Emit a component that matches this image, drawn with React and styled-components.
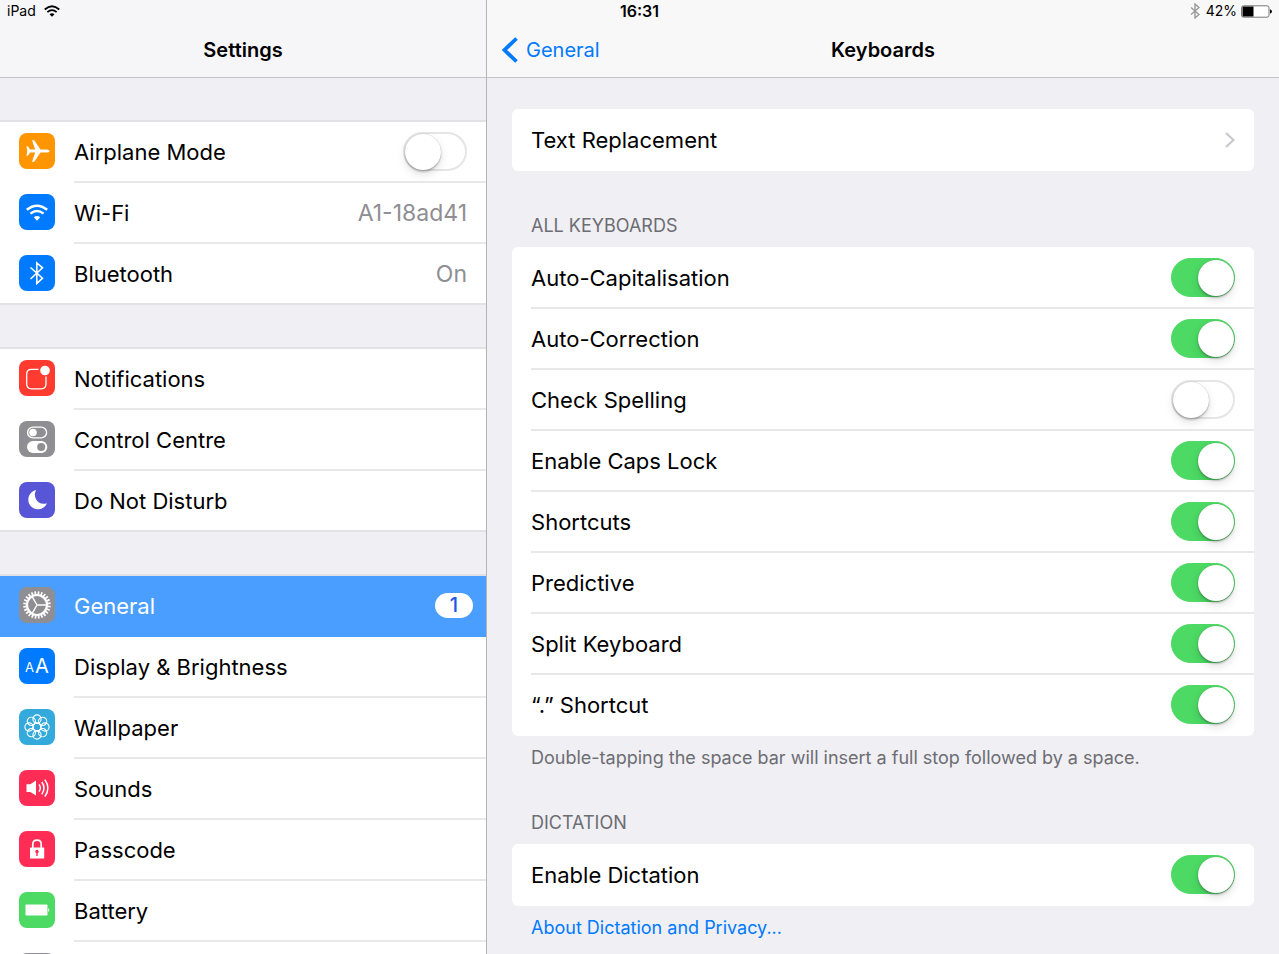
import React, { useState } from "react";
import styled, { createGlobalStyle } from "styled-components";

const GlobalStyle = createGlobalStyle`
  * {
    box-sizing: border-box;
  }

  body {
    margin: 0;
    background: #efeff4;
    color: #000;
    font-family: Inter, "Liberation Sans", sans-serif;
    font-size: 22px;
  }
`;

const Page = styled.div`
  display: flex;
  flex-direction: column;
  height: 100vh;
  overflow: hidden;
`;

/* the two bar tints and the pane divider run up behind the status bar */
const StatusBar = styled.header`
  display: grid;
  grid-template-columns: 1fr auto 1fr;
  align-items: center;
  height: 22px;
  padding: 0 7px;
  font-size: 14px;
  line-height: 20px;
  background: linear-gradient(
    90deg,
    #f6f6f8 38%,
    #b4b4b8 38%,
    #b4b4b8 calc(38% + 1px),
    #f8f8f8 calc(38% + 1px)
  );
`;

const StatusSide = styled.div`
  display: flex;
  align-items: center;
  justify-content: ${({ $end }) => ($end ? "flex-end" : "flex-start")};
  gap: ${({ $end }) => ($end ? "6px" : "8px")};
`;

const Charge = styled.span`
  display: flex;
  align-items: center;
  gap: 4px;
`;

const Time = styled.time`
  font-size: 16px;
  font-weight: 600;
`;

const Panes = styled.div`
  display: grid;
  grid-template-columns: 38% 1fr;
  flex: 1;
  min-height: 0;
`;

const Pane = styled.section`
  display: flex;
  flex-direction: column;
  min-width: 0;
  min-height: 0;
  border-left: ${({ $divided }) => ($divided ? "1px solid #b4b4b8" : "none")};
`;

const NavBar = styled.div`
  display: grid;
  grid-template-columns: 1fr auto 1fr;
  align-items: center;
  flex: none;
  height: 56px;
  padding: 0 15px;
  background: ${({ $light }) => ($light ? "#f8f8f8" : "#f6f6f8")};
  border-bottom: 1px solid #c4c4c8;
`;

const NavTitle = styled.h1`
  grid-column: 2;
  margin: 0;
  font-size: 20px;
  font-weight: 600;
  line-height: 24px;
`;

const BackLink = styled.a`
  display: flex;
  align-items: center;
  gap: 8px;
  font-size: 20px;
  line-height: 24px;
  color: #007aff;
  text-decoration: none;
`;

const Scroller = styled.div`
  flex: 1;
  min-height: 0;
  overflow-y: auto;
  scrollbar-width: none;
  padding: ${({ $inset }) => ($inset ? "31px 25px" : "42px 0")};
`;

const ItemRow = styled.a`
  display: flex;
  align-items: center;
  gap: 19px;
  height: 61px;
  padding-left: 19px;
  color: ${({ $active }) => ($active ? "#fff" : "inherit")};
  background: ${({ $active }) => ($active ? "#4a9eff" : "none")};
  text-decoration: none;
`;

const ItemBody = styled.span`
  display: flex;
  align-items: center;
  justify-content: space-between;
  flex: 1;
  align-self: stretch;
  padding-right: ${({ $badge }) => ($badge ? "13px" : "19px")};
  border-bottom: 2px solid ${({ $badge }) => ($badge ? "#4a9eff" : "#e8e8ea")};
`;

const Group = styled.ul`
  margin: 0 0 42px;
  padding: 0;
  list-style: none;
  background: #fff;
  border: solid #e2e2e6;
  border-width: 2px 0;

  li:last-child ${ItemRow} {
    height: 59px;
  }

  li:last-child ${ItemBody} {
    border-bottom: none;
  }
`;

const Tile = styled.span`
  display: flex;
  flex: none;
  align-self: flex-start;
  width: 36px;
  height: 36px;
  margin-top: 11px;
  border-radius: 8px;
  background: ${({ $color }) => $color};
`;

const Value = styled.span`
  color: #8e8e93;
  font-size: 23px;
`;

const Badge = styled.span`
  width: 38px;
  border-radius: 13px;
  background: #fff;
  color: #1f56ea;
  font-size: 20px;
  font-weight: 500;
  line-height: 25px;
  text-align: center;
`;

const Section = styled.section`
  margin-bottom: 43px;
`;

const SectionTitle = styled.h2`
  margin: 0 19px 9px;
  color: #6d6d72;
  font-size: 18px;
  font-weight: 400;
  line-height: 24px;
`;

const Card = styled.div`
  padding-top: 1px;
  border-radius: 6px;
  background: #fff;
`;

const CardRow = styled.label`
  display: flex;
  align-items: center;
  justify-content: space-between;
  height: 61px;
  margin-left: 19px;
  padding-right: 19px;
  border-bottom: 2px solid #e8e8ea;
  color: inherit;
  text-decoration: none;

  &:last-child {
    border-color: transparent;
  }
`;

const Footnote = styled.p`
  margin: 12px 19px 0;
  color: #6d6d72;
  font-size: 18px;
  line-height: 20px;
`;

const TextLink = styled.a`
  color: #007aff;
  text-decoration: none;
`;

const Toggle = styled.input.attrs({ type: "checkbox", role: "switch" })`
  appearance: none;
  display: flex;
  align-items: center;
  flex: none;
  width: 64px;
  height: 39px;
  margin: 0;
  border: 2px solid #e5e5e5;
  border-radius: 20px;
  background: #fff;

  &::before {
    content: "";
    width: 36px;
    height: 36px;
    border-radius: 50%;
    background: #fff;
    box-shadow: 0 0 1px rgba(0, 0, 0, 0.3), 0 2px 2px rgba(0, 0, 0, 0.2),
      0 4px 10px rgba(0, 0, 0, 0.12);
  }

  &:checked {
    justify-content: flex-end;
    border-width: 1px;
    border-color: #4cd964;
    background: #4cd964;
  }
`;

const WifiGlyph = ({ width, height }) => (
  <svg width={width} height={height} viewBox="0 0 22 16" fill="none" stroke="currentColor" strokeWidth="2.5">
    <path d="M1 6 Q11 -3 21 6" />
    <path d="M4.6 9.6 Q11 4 17.4 9.6" />
    <path d="M11 16 L7.6 12.6 Q11 9.8 14.4 12.6 Z" fill="currentColor" stroke="none" />
  </svg>
);

const BluetoothGlyph = () => (
  <svg width="10" height="16" viewBox="0 0 10 16" fill="none" stroke="#9a9a9a" strokeWidth="1.4">
    <path d="M1 4.5 L9 11.5 L5 15 V1 L9 4.5 L1 11.5" />
  </svg>
);

const BatteryGlyph = () => (
  <svg width="31" height="13" viewBox="0 0 31 13">
    <rect x="0.5" y="0.8" width="27.5" height="11.4" rx="2" fill="#fff" stroke="#777" />
    <path d="M1.5 1.5 H12.5 V11.5 H1.5 Z" />
    <path d="M29 4.3 Q31 5 31 6.5 T29 8.7 Z" />
  </svg>
);

const petals = [0, 45, 90, 135, 180, 225, 270, 315];
const teeth = Array.from({ length: 24 }, (_, i) => i * 15 + 7);

const glyphs = {
  airplane: (
    <path
      fill="#fff"
      d="M30.5 18 C30.5 16.9 29 16.4 27 16.4 H21.5 L15.2 7.3 H13 L16.2 16.4 H11.2 L8.8 13.2 H7.4 L8.3 18 L7.4 22.8 H8.8 L11.2 19.6 H16.2 L13 28.7 H15.2 L21.5 19.6 H27 C29 19.6 30.5 19.1 30.5 18 Z"
    />
  ),
  wifi: (
    <g fill="none" stroke="#fff" strokeWidth="2.4">
      <path d="M7.8 15.8 Q18 7.5 28.2 15.8" />
      <path d="M11.4 19.7 Q18 14.2 24.6 19.7" />
      <path d="M18 26.8 L14.8 23.2 Q18 21 21.2 23.2 Z" fill="#fff" stroke="none" />
    </g>
  ),
  bluetooth: (
    <path d="M11.5 12.5 L23.5 23.2 L17.8 28.5 V8 L23.5 12.8 L11.5 24" fill="none" stroke="#fff" strokeWidth="1.6" />
  ),
  notifications: (
    <g>
      <path
        d="M19.5 9.4 H12.5 Q7.7 9.4 7.7 14.2 V24 Q7.7 28.8 12.5 28.8 H22.2 Q27 28.8 27 24 V16.5"
        fill="none"
        stroke="#fff"
        strokeWidth="1.3"
      />
      <circle cx="26" cy="10.5" r="4.8" fill="#fff" />
    </g>
  ),
  control: (
    <g>
      <rect x="8.6" y="6.1" width="19" height="10.8" rx="5.4" fill="none" stroke="#fff" strokeWidth="1.4" />
      <circle cx="14" cy="11.5" r="3.8" fill="#fff" />
      <rect x="8" y="20" width="20.3" height="12" rx="6" fill="#fff" />
      <circle cx="22.2" cy="26" r="4" fill="#8e8e93" />
    </g>
  ),
  moon: <path d="M17.2 8 C13 14.5 19 24.5 28 21.2 C26 25.5 22.5 27.2 19 27.2 C13.5 27.2 9.3 23 9.3 17.8 C9.3 13 12.6 9 17.2 8 Z" fill="#fff" />,
  gear: (
    <g stroke="#fff" fill="none">
      <circle cx="18" cy="18" r="10" strokeWidth="2.2" />
      {teeth.map((a) => (
        <path key={a} d="M18 8 V4.2" strokeWidth="1.7" transform={`rotate(${a} 18 18)`} />
      ))}
      <path d="M18 18 H28 M18 18 L13 9.3 M18 18 L13 26.7" strokeWidth="1.4" />
    </g>
  ),
  display: (
    <g fill="#fff" fontFamily="Inter, sans-serif">
      <text x="6" y="24" fontSize="13">A</text>
      <text x="16" y="25" fontSize="20">A</text>
    </g>
  ),
  wallpaper: (
    <g fill="none" stroke="#fff" strokeWidth="1.1">
      {petals.map((a) => (
        <circle key={a} cx="18" cy="10" r="4.1" transform={`rotate(${a} 18 18)`} />
      ))}
      <circle cx="18" cy="18" r="3.9" />
      {petals.map((a) => (
        <path key={a} d="M18 14.1 Q16.6 12.6 15.4 13" strokeWidth="0.9" transform={`rotate(${a} 18 18)`} />
      ))}
    </g>
  ),
  sounds: (
    <g>
      <path d="M7.5 14.2 H11.2 L17 10.5 V25.5 L11.2 22 H7.5 Z" fill="#fff" />
      <g fill="none" stroke="#fff" strokeWidth="1.5">
        <path d="M20 14.5 Q22.6 18 20 21.6" />
        <path d="M22.8 12 Q27.2 18 22.8 24.2" />
        <path d="M25.8 9.6 Q32 18 25.8 26.6" />
      </g>
    </g>
  ),
  passcode: (
    <g>
      <path d="M13.8 17.5 V13.3 Q13.8 9.2 18 9.2 T22.2 13.3 V17.5" fill="none" stroke="#fff" strokeWidth="1.7" />
      <rect x="11" y="16.5" width="14.2" height="11" rx="0.6" fill="#fff" />
      <circle cx="18" cy="20.5" r="1.7" fill="#ff2d55" />
      <path d="M18 21 V25" stroke="#ff2d55" strokeWidth="1.4" />
    </g>
  ),
  battery: (
    <g fill="#fff">
      <rect x="6.5" y="12.5" width="22" height="11" rx="0.8" />
      <path d="M29.2 16 Q31.5 18 29.2 20 Z" />
    </g>
  ),
  privacy: (
    <path
      d="M12 20 V12 M16 18 V9 M20 18 V9 M24 19 V12 M12 19 Q12 28 18 28 T24 19"
      fill="none"
      stroke="#fff"
      strokeWidth="2.4"
      strokeLinecap="round"
    />
  ),
};

const groups = [
  [
    { label: "Airplane Mode", icon: "airplane", color: "#ff9500", toggle: true },
    { label: "Wi-Fi", icon: "wifi", color: "#007aff", value: "A1-18ad41" },
    { label: "Bluetooth", icon: "bluetooth", color: "#007aff", value: "On" },
  ],
  [
    { label: "Notifications", icon: "notifications", color: "#ff3b30" },
    { label: "Control Centre", icon: "control", color: "#8e8e93" },
    { label: "Do Not Disturb", icon: "moon", color: "#5856d6" },
  ],
  [
    { label: "General", icon: "gear", color: "#8e8e93", badge: 1 },
    { label: "Display & Brightness", icon: "display", color: "#007aff" },
    { label: "Wallpaper", icon: "wallpaper", color: "#34aadc" },
    { label: "Sounds", icon: "sounds", color: "#ff2d55" },
    { label: "Passcode", icon: "passcode", color: "#ff2d55" },
    { label: "Battery", icon: "battery", color: "#4cd964" },
    { ariaLabel: "Privacy", icon: "privacy", color: "#8e8e93" },
  ],
];

const keyboardOptions = [
  { label: "Auto-Capitalisation", on: true },
  { label: "Auto-Correction", on: true },
  { label: "Check Spelling", on: false },
  { label: "Enable Caps Lock", on: true },
  { label: "Shortcuts", on: true },
  { label: "Predictive", on: true },
  { label: "Split Keyboard", on: true },
  { label: "“.” Shortcut", on: true },
];

function Switch({ initial }) {
  const [on, setOn] = useState(initial);

  return <Toggle checked={on} onChange={() => setOn(!on)} />;
}

function SidebarItem({ item }) {
  const rowProps = item.toggle ? { as: "label" } : { href: "#", "aria-label": item.ariaLabel };

  return (
    <li>
      <ItemRow {...rowProps} $active={!!item.badge}>
        <Tile $color={item.color}>
          <svg width="36" height="36" viewBox="0 0 36 36" aria-hidden="true">
            {glyphs[item.icon]}
          </svg>
        </Tile>
        <ItemBody $badge={!!item.badge}>
          <span>{item.label}</span>
          {item.toggle && <Switch initial={false} />}
          {item.value && <Value>{item.value}</Value>}
          {item.badge && <Badge>{item.badge}</Badge>}
        </ItemBody>
      </ItemRow>
    </li>
  );
}

function Sidebar() {
  return (
    <Pane as="nav">
      <NavBar>
        <NavTitle>Settings</NavTitle>
      </NavBar>
      <Scroller>
        {groups.map((items) => (
          <Group key={items[0].label}>
            {items.map((item) => (
              <SidebarItem key={item.icon} item={item} />
            ))}
          </Group>
        ))}
      </Scroller>
    </Pane>
  );
}

function Keyboards() {
  return (
    <Pane as="main" $divided>
      <NavBar $light>
        <BackLink href="#">
          <svg width="16" height="26" viewBox="0 0 16 26" fill="none" stroke="#007aff" strokeWidth="3.8">
            <path d="M14.5 1.5 L2.5 13 L14.5 24.5" />
          </svg>
          General
        </BackLink>
        <NavTitle>Keyboards</NavTitle>
      </NavBar>
      <Scroller $inset>
        <Section>
          <Card>
            <CardRow as="a" href="#">
              Text Replacement
              <svg width="10" height="16" viewBox="0 0 10 16" fill="none" stroke="#c7c7cc" strokeWidth="2.2">
                <path d="M1 1 L8.5 8 L1 15" />
              </svg>
            </CardRow>
          </Card>
        </Section>
        <Section>
          <SectionTitle>ALL KEYBOARDS</SectionTitle>
          <Card>
            {keyboardOptions.map(({ label, on }) => (
              <CardRow key={label}>
                {label}
                <Switch initial={on} />
              </CardRow>
            ))}
          </Card>
          <Footnote>Double-tapping the space bar will insert a full stop followed by a space.</Footnote>
        </Section>
        <Section>
          <SectionTitle>DICTATION</SectionTitle>
          <Card>
            <CardRow>
              Enable Dictation
              <Switch initial={true} />
            </CardRow>
          </Card>
          <Footnote>
            <TextLink href="#">About Dictation and Privacy...</TextLink>
          </Footnote>
        </Section>
      </Scroller>
    </Pane>
  );
}

function App() {
  return (
    <Page>
      <GlobalStyle />
      <StatusBar>
        <StatusSide>
          iPad
          <WifiGlyph width={16} height={12} />
        </StatusSide>
        <Time>16:31</Time>
        <StatusSide $end>
          <BluetoothGlyph />
          <Charge>
            42%
            <BatteryGlyph />
          </Charge>
        </StatusSide>
      </StatusBar>
      <Panes>
        <Sidebar />
        <Keyboards />
      </Panes>
    </Page>
  );
}

export default App;
